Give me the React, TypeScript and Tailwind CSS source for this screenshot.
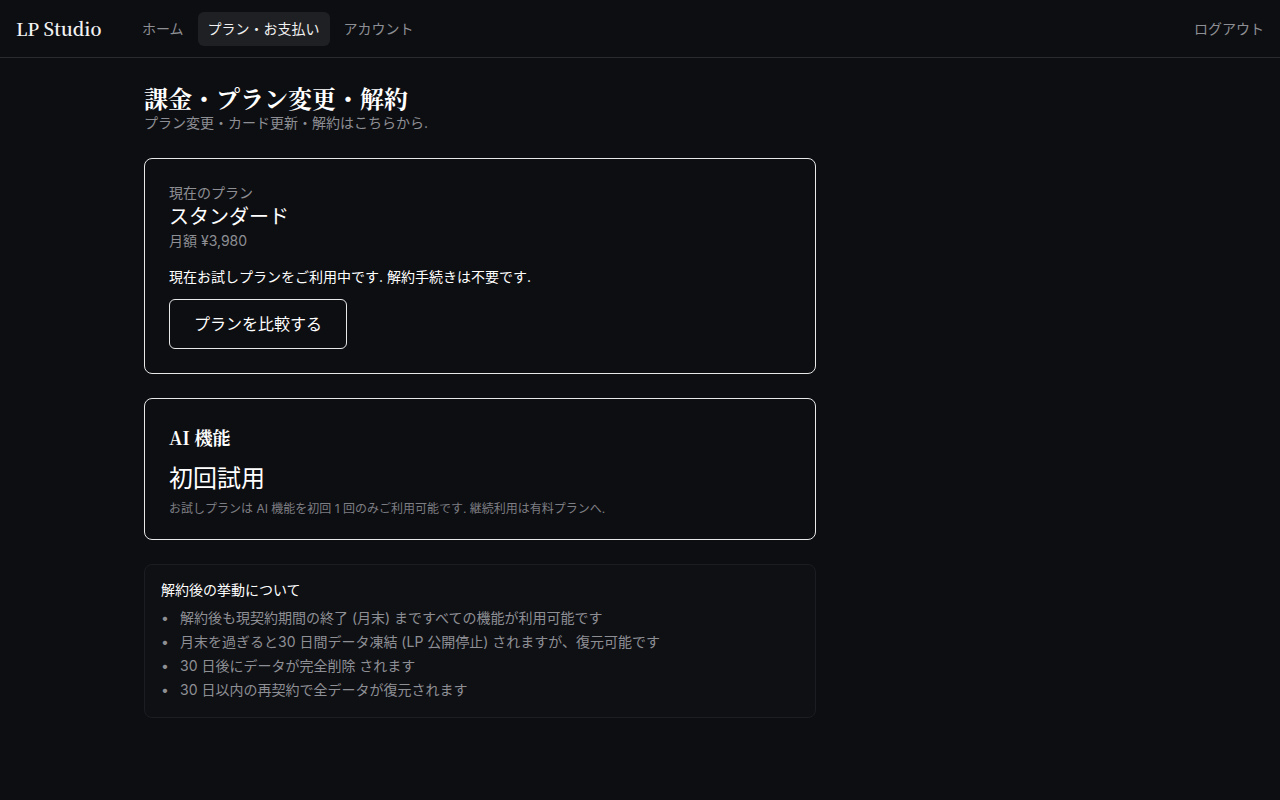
import React from 'react';

const sans = { fontFamily: 'Inter, "Noto Sans CJK JP", sans-serif' };
const serif = { fontFamily: '"Noto Serif CJK JP", "Liberation Serif", "Noto Sans CJK JP", serif' };

const notes = [
  '解約後も現契約期間の終了 (月末) まですべての機能が利用可能です',
  '月末を過ぎると30 日間データ凍結 (LP 公開停止) されますが、復元可能です',
  '30 日後にデータが完全削除 されます',
  '30 日以内の再契約で全データが復元されます',
];

export default function App() {
  return (
    <div className="min-h-screen bg-[#0d0e12] text-white" style={sans}>
      <header className="h-[58px] border-b border-[#2a2b30] flex items-center justify-between px-4">
        <div className="flex items-center">
          <div className="text-[18px] font-semibold text-[#f2f2f2] w-[116px]" style={serif}>
            LP Studio
          </div>
          <nav className="flex items-center gap-1 text-sm">
            <a className="px-[10px] py-[7px] rounded-md text-[#8e8f94]">ホーム</a>
            <a className="px-[10px] py-[7px] rounded-md bg-[#1f2024] text-[#f0f0f0]">プラン・お支払い</a>
            <a className="px-[10px] py-[7px] rounded-md text-[#8e8f94]">アカウント</a>
          </nav>
        </div>
        <a className="text-sm text-[#8e8f94]">ログアウト</a>
      </header>

      <main className="max-w-5xl mx-auto px-4 pt-6">
        <div className="max-w-2xl">
          <h1 className="text-[24px] font-bold leading-8" style={serif}>課金・プラン変更・解約</h1>
          <p className="text-sm text-[#8e8f94] leading-5 -mt-[1px]">プラン変更・カード更新・解約はこちらから.</p>

          <div className="mt-[25px] flex flex-col gap-6">
            <section className="border border-[#e8e8e8] rounded-lg px-6 pt-6 pb-6">
              <div className="text-sm text-[#8e8f94] leading-5">現在のプラン</div>
              <div className="text-[20px] leading-7">スタンダード</div>
              <div className="text-sm text-[#8e8f94] leading-5">月額 ¥3,980</div>
              <p className="text-sm mt-4 leading-5">現在お試しプランをご利用中です. 解約手続きは不要です.</p>
              <button className="mt-3 h-[50px] px-6 border border-[#e8e8e8] rounded-md text-base">
                プランを比較する
              </button>
            </section>

            <section className="border border-[#e8e8e8] rounded-lg px-6 pt-6 pb-[22px]">
              <h2 className="text-[18px] font-bold leading-7" style={serif}>AI 機能</h2>
              <div className="text-[24px] leading-8 mt-3">初回試用</div>
              <p className="text-xs text-[#7d7e83] leading-4 mt-[6px]">
                お試しプランは AI 機能を初回 1 回のみご利用可能です. 継続利用は有料プランへ.
              </p>
            </section>

            <section className="border border-[#1c1d22] bg-[#0f1014] rounded-lg px-4 pt-[15px] pb-[15px]">
              <h3 className="text-sm leading-5 mb-[6px]">解約後の挙動について</h3>
              <ul className="text-sm text-[#8e8f94]">
                {notes.map((n) => (
                  <li key={n} className="flex leading-6">
                    <span className="w-[19px]">•</span>
                    <span>{n}</span>
                  </li>
                ))}
              </ul>
            </section>
          </div>
        </div>
      </main>
    </div>
  );
}
